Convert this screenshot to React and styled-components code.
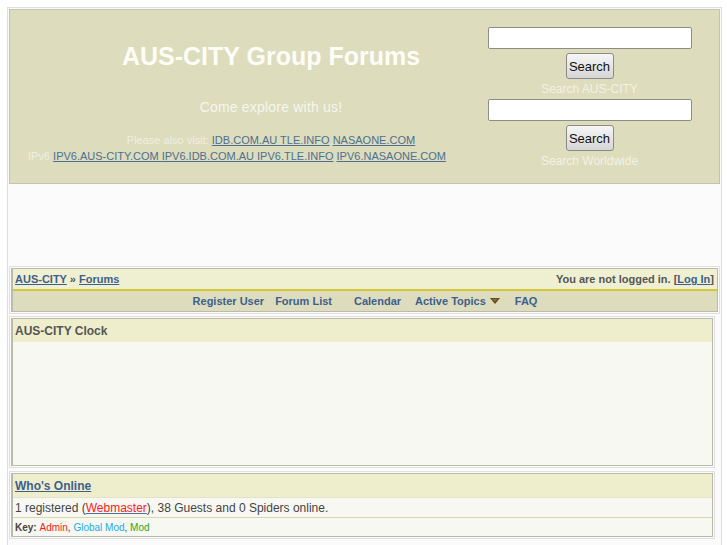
import styled, { createGlobalStyle } from 'styled-components';

const GlobalStyle = createGlobalStyle`
  body {
    margin: 0;
    background: #ffffff;
    font-family: "Liberation Sans", Arial, sans-serif;
  }
`;

const Page = styled.div`
  margin: 7px 0 0 7px;
  width: 711px;
  padding: 1px;
  border: 1px solid #dddddd;
  border-bottom: none;
  background: #fbfbfb;
  min-height: 540px;
`;

const Header = styled.div`
  display: flex;
  height: 175px;
  box-sizing: border-box;
  border: 1px solid #c3c3b3;
  background: #dddcbc;
`;

const Brand = styled.div`
  width: 450px;
  display: flex;
  flex-direction: column;
  align-items: center;
  padding-left: 72px;
  box-sizing: border-box;
`;

const Title = styled.h1`
  margin: 32px 0 0;
  font-size: 25px;
  line-height: 28px;
  font-weight: bold;
  color: #fdfdf8;
  white-space: nowrap;
`;

const Tagline = styled.div`
  margin-top: 29px;
  font-size: 14px;
  line-height: 16px;
  letter-spacing: 0.2px;
  color: #f6f6ee;
  white-space: nowrap;
`;

const VisitLine = styled.div`
  font-size: 11px;
  line-height: 16px;
  color: #f0f0e2;
  white-space: nowrap;
  margin-top: ${p => p.$mt || 0}px;
  margin-left: ${p => p.$ml || 0}px;
`;

const HeadLink = styled.a`
  color: #4d6f93;
  text-decoration: underline;
`;

const SearchCol = styled.div`
  flex: 1;
  display: flex;
  flex-direction: column;
  align-items: center;
  padding-top: 17px;
`;

const SearchInput = styled.input`
  width: 204px;
  height: 22px;
  box-sizing: border-box;
  border: 1px solid #8e8e86;
  border-radius: 2px;
  background: #ffffff;
  margin: 0;
`;

const SearchButton = styled.button`
  margin-top: 4px;
  width: 48px;
  height: 26px;
  box-sizing: border-box;
  padding: 0;
  font-family: "Liberation Sans", Arial, sans-serif;
  font-size: 13px;
  color: #111111;
  border: 1px solid #8a8a86;
  border-radius: 3px;
  background: linear-gradient(#f6f6f6, #d6d6d6);
`;

const SearchLabel = styled.div`
  font-size: 12px;
  line-height: 20px;
  color: #f2f2e6;
`;

const AdSpace = styled.div`
  height: 82px;
`;

const Outer = styled.div`
  border: 1px solid #e0e0e0;
  padding: 1px;
  margin-top: ${p => p.$mt || 0}px;
  margin-right: ${p => p.$mr || 0}px;
`;

const Inner = styled.div`
  border: 1px solid #bbbbab;
  border-left-width: 2px;
  background: #f8f8f2;
`;

const Crumbs = styled.div`
  display: flex;
  justify-content: space-between;
  align-items: center;
  height: 20px;
  padding: 0 3px 0 2px;
  background: #efefd2;
  border-bottom: 2px solid #d2c83c;
  font-size: 11px;
  font-weight: bold;
  color: #555555;
`;

const NavLink = styled.a`
  color: #3d5f8e;
  text-decoration: underline;
`;

const Menu = styled.div`
  display: flex;
  justify-content: center;
  align-items: center;
  height: 20px;
  background: #dddcbc;
  font-size: 11px;
  font-weight: bold;
`;

const MenuItem = styled.span`
  display: flex;
  align-items: center;
  gap: 4px;
  color: #3d5f8e;
  margin-left: ${p => p.$ml || 0}px;
`;

const PanelHead = styled.div`
  height: 23px;
  display: flex;
  align-items: center;
  padding-left: 2px;
  background: #eeeecc;
  font-size: 12px;
  font-weight: bold;
  color: #555555;
`;

const PanelBody = styled.div`
  height: ${p => p.$h}px;
`;

const OnlineRow = styled.div`
  display: flex;
  align-items: center;
  padding-left: 2px;
  height: ${p => p.$h}px;
  border-top: 1px solid ${p => p.$line};
  font-size: ${p => p.$fs}px;
  color: #444444;
`;

const Tag = styled.span`
  color: ${p => p.$c};
`;

const UserLink = styled.a`
  color: #ff2020;
  text-decoration: underline;
  text-decoration-color: #4d6f93;
`;

const Arrow = () => (
  <svg width="10" height="6" viewBox="0 0 10 6">
    <polygon points="0,0 10,0 5,6" fill="#5e4e16" />
    <polygon points="2.5,1 7.5,1 5,3.8" fill="#8a7630" />
  </svg>
);

const App = () => {
  return (
    <>
      <GlobalStyle />
      <Page>
        <Header>
          <Brand>
            <Title>AUS-CITY Group Forums</Title>
            <Tagline>Come explore with us!</Tagline>
            <VisitLine $mt={17}>
              Please also visit: <HeadLink>{'IDB.COM.AU '}</HeadLink>
              <HeadLink>{'TLE.INFO'}</HeadLink> <HeadLink>NASAONE.COM</HeadLink>
            </VisitLine>
            <VisitLine $ml={-68}>
              IPv6 <HeadLink>{'IPV6.AUS-CITY.COM '}</HeadLink>
              <HeadLink>{'IPV6.IDB.COM.AU '}</HeadLink>
              <HeadLink>IPV6.TLE.INFO</HeadLink> <HeadLink>IPV6.NASAONE.COM</HeadLink>
            </VisitLine>
          </Brand>
          <SearchCol>
            <SearchInput type="text" />
            <SearchButton type="button">Search</SearchButton>
            <SearchLabel>Search AUS-CITY</SearchLabel>
            <SearchInput type="text" />
            <SearchButton type="button">Search</SearchButton>
            <SearchLabel>Search Worldwide</SearchLabel>
          </SearchCol>
        </Header>

        <AdSpace />

        <Outer>
          <Inner>
            <Crumbs>
              <span>
                <NavLink>AUS-CITY</NavLink> » <NavLink>Forums</NavLink>
              </span>
              <span>
                You are not logged in. [<NavLink>Log In</NavLink>]
              </span>
            </Crumbs>
            <Menu>
              <MenuItem>Register User</MenuItem>
              <MenuItem $ml={11}>Forum List</MenuItem>
              <MenuItem $ml={22}>Calendar</MenuItem>
              <MenuItem $ml={14}>
                Active Topics <Arrow />
              </MenuItem>
              <MenuItem $ml={15}>FAQ</MenuItem>
            </Menu>
          </Inner>
        </Outer>

        <Outer $mt={2} $mr={5}>
          <Inner>
            <PanelHead>AUS-CITY Clock</PanelHead>
            <PanelBody $h={123} />
          </Inner>
        </Outer>

        <Outer $mt={3} $mr={5}>
          <Inner>
            <PanelHead>
              <NavLink>Who's Online</NavLink>
            </PanelHead>
            <OnlineRow $h={19} $fs={12} $line="#e2e2cc">
              1 registered (<UserLink>Webmaster</UserLink>), 38 Guests and 0 Spiders online.
            </OnlineRow>
            <OnlineRow $h={18} $fs={10} $line="#d8d6b0">
              <b>Key:</b>&nbsp;<Tag $c="#ff1a1a">Admin</Tag>,&nbsp;
              <Tag $c="#22aaee">Global Mod</Tag>,&nbsp;<Tag $c="#20aa20">Mod</Tag>
            </OnlineRow>
          </Inner>
        </Outer>
      </Page>
    </>
  );
};

export default App;
